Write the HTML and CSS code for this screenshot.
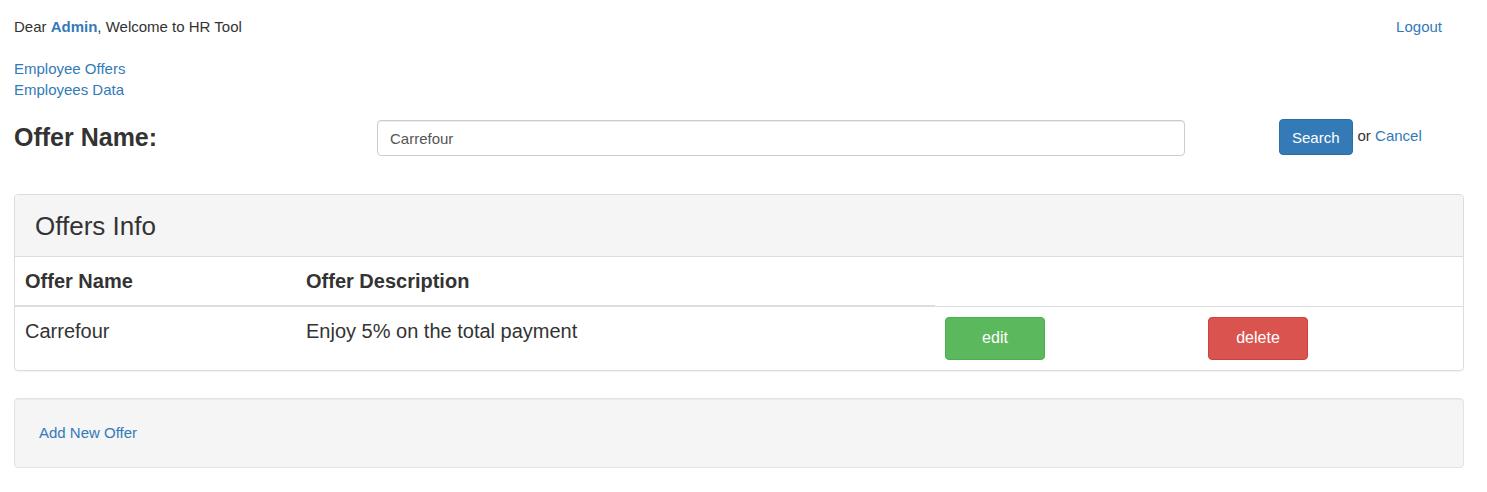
FILE: index.html
```html
<!DOCTYPE html>
<html>
<head>
<meta charset="utf-8">
<link rel="stylesheet" href="styles.css">
</head>
<body>
<div class="page">
  <div class="topbar">
    <div class="greeting">Dear <a href="#" class="strong">Admin</a>, Welcome to HR Tool</div>
    <a href="#">Logout</a>
  </div>
  <nav class="nav">
    <a href="#">Employee Offers</a>
    <a href="#">Employees Data</a>
  </nav>
  <form class="search-row">
    <h3 class="label">Offer Name:</h3>
    <input class="input" type="text" value="Carrefour">
    <button type="button" class="btn btn-primary">Search</button>
    <span class="or">or <a href="#">Cancel</a></span>
  </form>
  <div class="panel">
    <div class="panel-heading">Offers Info</div>
    <table class="table">
      <colgroup>
        <col class="c1"><col class="c2"><col class="c3"><col class="c4">
      </colgroup>
      <thead>
        <tr><th>Offer Name</th><th>Offer Description</th></tr>
      </thead>
      <tbody>
        <tr>
          <td>Carrefour</td>
          <td>Enjoy 5% on the total payment</td>
          <td><button type="button" class="btn btn-action btn-success">edit</button></td>
          <td><button type="button" class="btn btn-action btn-danger">delete</button></td>
        </tr>
      </tbody>
    </table>
  </div>
  <div class="well">
    <a href="#">Add New Offer</a>
  </div>
</div>
</body>
</html>
```
FILE: styles.css
```css
* { box-sizing: border-box; }
html, body { margin: 0; padding: 0; background: #fff; }
body {
  font-family: "Liberation Sans", Arial, Helvetica, sans-serif;
  font-size: 15px;
  line-height: 21px;
  color: #333;
}
a { color: #337ab7; text-decoration: none; }
a.strong { font-weight: bold; }
.page { padding: 16px 23px 20px 14px; }
.topbar {
  display: flex;
  justify-content: space-between;
  padding-right: 22px;
}
.nav {
  margin-top: 21px;
  display: flex;
  flex-direction: column;
  align-items: flex-start;
}
.search-row {
  margin: 19px 0 0;
  display: flex;
  align-items: flex-start;
  height: 37px;
}
.label {
  margin: 4px 0 0;
  width: 363px;
  font-size: 25px;
  line-height: 28px;
  font-weight: bold;
  color: #333;
}
.input {
  width: 808px;
  height: 36px;
  margin-top: 1px;
  padding: 6px 12px;
  border: 1px solid #ccc;
  border-radius: 4px;
  font-family: inherit;
  font-size: 15px;
  color: #555;
  box-shadow: inset 0 1px 1px rgba(0,0,0,.075);
  outline: none;
}
.btn {
  font-family: inherit;
  border: 1px solid transparent;
  border-radius: 4px;
  cursor: pointer;
  color: #fff;
}
.btn-primary {
  margin-left: 94px;
  height: 36px;
  padding: 6px 12px;
  font-size: 15px;
  line-height: 21px;
  background: #337ab7;
  border-color: #2e6da4;
}
.or { margin: 6px 0 0 5px; }
.panel {
  margin-top: 38px;
  border: 1px solid #ddd;
  border-radius: 4px;
  box-shadow: 0 1px 1px rgba(0,0,0,.05);
  overflow: hidden;
}
.panel-heading {
  background: #f5f5f5;
  border-bottom: 1px solid #ddd;
  padding: 17px 20px 15px;
  font-size: 26px;
  line-height: 29px;
  color: #333;
}
.table {
  width: 100%;
  border-collapse: collapse;
  table-layout: fixed;
  font-size: 20px;
  line-height: 28px;
}
.c1 { width: 281px; }
.c2 { width: 639px; }
.c3 { width: 263px; }
.c4 { width: auto; }
.table th {
  text-align: left;
  font-weight: bold;
  padding: 10px;
  border-bottom: 2px solid #ddd;
}
.table td {
  padding: 10px;
  border-top: 1px solid #ddd;
  vertical-align: top;
}
.btn-action {
  width: 100px;
  height: 43px;
  font-size: 16px;
  line-height: 22px;
  padding: 0;
}
.btn-success { background: #5cb85c; border-color: #4cae4c; }
.btn-danger { background: #d9534f; border-color: #d43f3a; }
.well {
  margin-top: 27px;
  background: #f5f5f5;
  border: 1px solid #e3e3e3;
  border-radius: 4px;
  box-shadow: inset 0 1px 1px rgba(0,0,0,.05);
  padding: 24px;
  line-height: 20px;
}
```
